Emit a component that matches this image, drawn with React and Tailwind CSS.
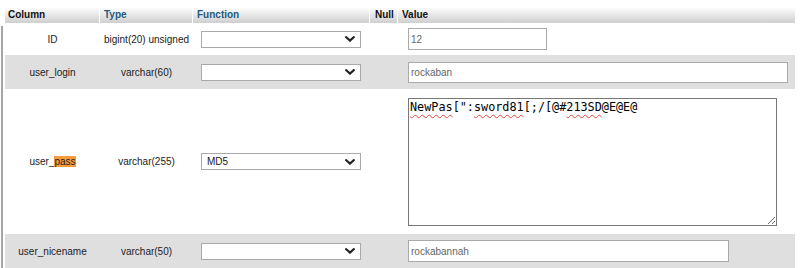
import React from 'react';

const rows = [
	{ name: 'ID', type: 'bigint(20) unsigned', fn: '', value: '12', kind: 'input', w: 'w-[139px]', ih: 'h-[22px]', h: 'h-[32px]', bg: 'bg-white' },
	{ name: 'user_login', type: 'varchar(60)', fn: '', value: 'rockaban', kind: 'input', w: 'w-[380px]', ih: 'h-[21px]', h: 'h-[34px]', bg: 'bg-[#dfdfdf]' },
	{ name: 'user_pass', type: 'varchar(255)', fn: 'MD5', value: '', kind: 'textarea', w: 'w-[369px]', ih: '', h: 'h-[145px]', bg: 'bg-white' },
	{ name: 'user_nicename', type: 'varchar(50)', fn: '', value: 'rockabannah', kind: 'input', w: 'w-[321px]', ih: 'h-[22px]', h: 'h-[34px]', bg: 'bg-[#dfdfdf]' },
];

function Chevron() {
	return (
		<svg width="10" height="6" viewBox="0 0 10 6" className="shrink-0">
			<polyline points="1.2,1.2 5,4.6 8.8,1.2" fill="none" stroke="#222" strokeWidth="2.2" strokeLinecap="square" />
		</svg>
	);
}

function FnSelect({ value }) {
	return (
		<div className="w-[160px] h-[17px] bg-white border border-[#aaa] flex items-center justify-between pl-[5px] pr-[5px] text-[10px] text-[#222]">
			<span>{value}</span>
			<Chevron />
		</div>
	);
}

function Squiggle({ children }) {
	return <span className="underline decoration-wavy decoration-[#e0453a] decoration-[1px] underline-offset-[3px]">{children}</span>;
}

function PassBox() {
	return (
		<div className="w-[369px] h-[128px] bg-white border border-[#777] px-[1px] pt-[1px] overflow-auto resize font-['DejaVu_Sans_Mono',monospace] text-[11.8px] leading-[15px] text-black whitespace-pre">
			<Squiggle>NewPas</Squiggle>{'["'}:<Squiggle>sword81</Squiggle>{'[;/[@#'}<Squiggle>213SD</Squiggle>@E@E@
		</div>
	);
}

export default function App() {
	return (
		<div className="w-[810px] h-[268px] bg-white overflow-hidden font-['Liberation_Sans',Arial,sans-serif] text-[10px] text-[#222] flex">
			<div className="w-[5px] shrink-0 pt-[26px] pl-[1px]">
				<div className="h-full w-[2px] bg-[#a5a5a5]" />
			</div>
			<div className="flex flex-col pt-[7px] w-[790px]">
				<div className="grid grid-cols-[95px_93px_177px_28px_397px] h-[16px] bg-gradient-to-b from-white to-[#cfcfcf] font-bold text-[10px] leading-[16px]">
					<div className="pl-[3px] text-[#111] border-r border-white">Column</div>
					<div className="pl-[4px] text-[#235a81] border-r border-white">Type</div>
					<div className="pl-[4px] text-[#235a81] border-r border-white">Function</div>
					<div className="pl-[5px] text-[#111] border-r border-white">Null</div>
					<div className="pl-[4px] text-[#111]">Value</div>
				</div>
				{rows.map((r) => (
					<div key={r.name} className={`grid grid-cols-[95px_93px_177px_28px_397px] items-center ${r.h} ${r.bg}`}>
						<div className="text-center">
							{r.name === 'user_pass' ? (
								<span>user_<span className="bg-[#fb9a3c]">pass</span></span>
							) : r.name}
						</div>
						<div className="text-center">{r.type}</div>
						<div className="pl-[8px]"><FnSelect value={r.fn} /></div>
						<div />
						<div className="pl-[10px]">
							{r.kind === 'textarea' ? (
								<PassBox />
							) : (
								<div className={`${r.w} ${r.ih} bg-white border border-[#aaa] pl-[2px] flex items-center text-[10px] text-[#666]`}>
									{r.value}
								</div>
							)}
						</div>
					</div>
				))}
			</div>
		</div>
	);
}
